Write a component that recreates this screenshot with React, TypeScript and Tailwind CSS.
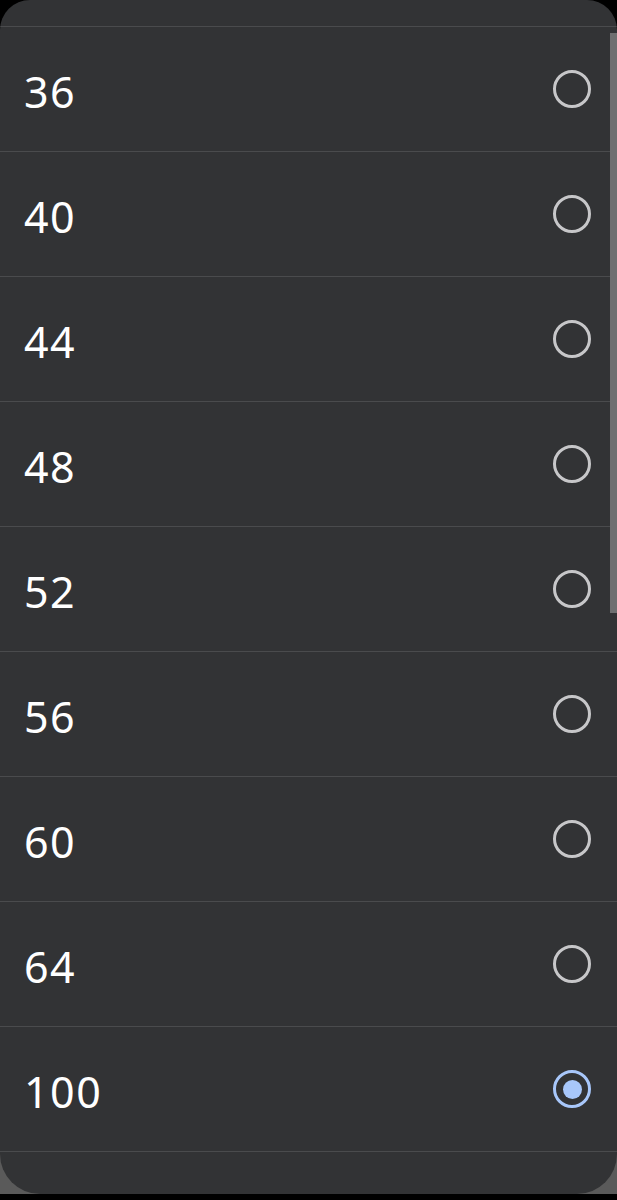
import { useState } from 'react'

const SIZES = ['36', '40', '44', '48', '52', '56', '60', '64', '100']

function Radio({ checked }: { checked: boolean }) {
  return (
    <span
      className={
        checked
          ? 'w-[38px] h-[38px] rounded-full border-[3px] border-[#a8c7fa] flex items-center justify-center'
          : 'w-[38px] h-[38px] rounded-full border-[3px] border-[#c7c7c9] flex items-center justify-center'
      }
    >
      {checked && <span className="w-[19px] h-[19px] rounded-full bg-[#a8c7fa]" />}
    </span>
  )
}

export default function App() {
  const [selected, setSelected] = useState('100')

  return (
    <div
      className="w-full h-[1200px] bg-black flex flex-col"
      style={{ fontFamily: '"Noto Sans", "Open Sans", sans-serif' }}
    >
      <div className="h-[1194px] bg-[linear-gradient(to_bottom,#000_0px,#000_1152px,#5a5a5a_1152px)]">
        <div className="relative h-full bg-[#323335] rounded-t-[30px] rounded-b-[40px] overflow-hidden flex flex-col">
          <div className="h-[26px]" />
          {SIZES.map((s) => (
            <button
              key={s}
              onClick={() => setSelected(s)}
              className="h-[125px] border-t border-[#4a4b4d] flex items-center justify-between pl-6 pr-[26px] text-left"
            >
              <span className="text-[43px] leading-none tracking-[1.5px] text-white pt-[5px]">{s}</span>
              <Radio checked={selected === s} />
            </button>
          ))}
          <div className="flex-1 border-t border-[#4a4b4d]" />

          {/* scrollbar */}
          <div className="absolute right-0 top-[33px] w-[7px] h-[580px] bg-[#6e6f70]" />
        </div>
      </div>
    </div>
  )
}
